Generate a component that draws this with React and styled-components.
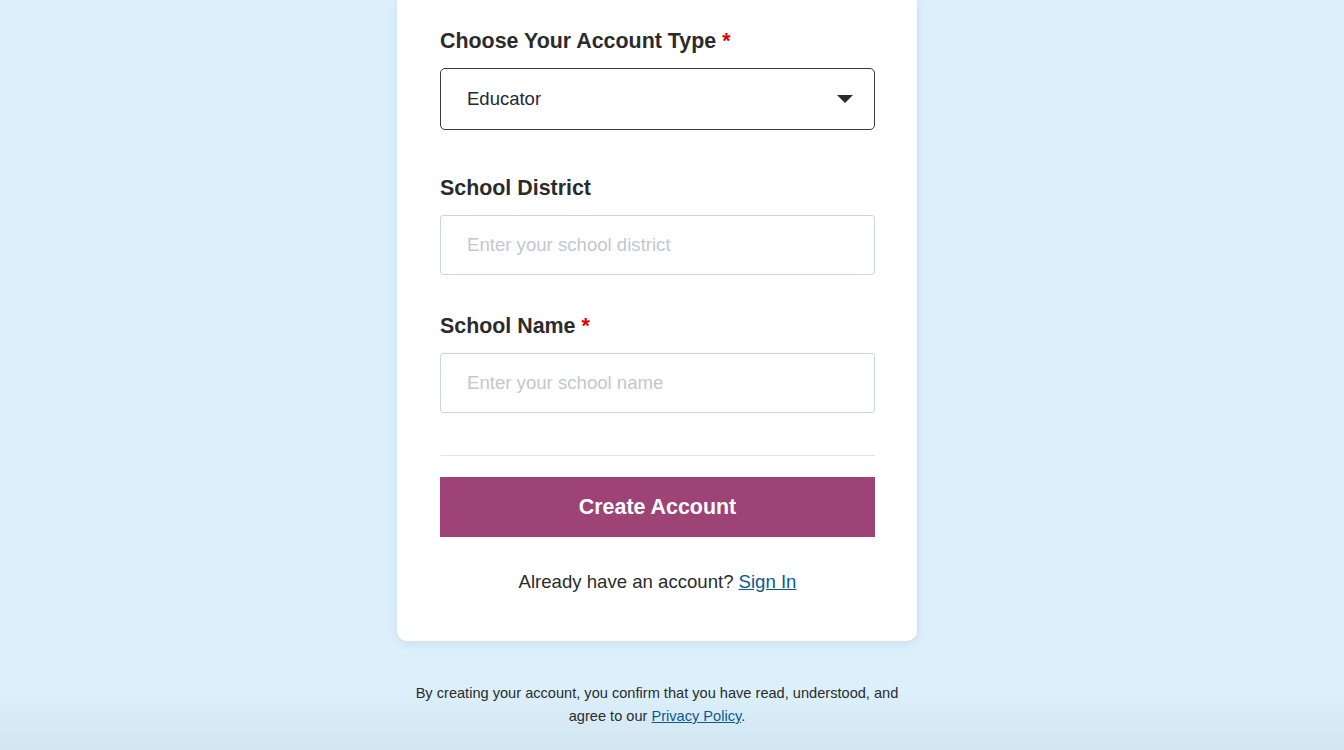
import React, { useState } from "react";
import styled, { createGlobalStyle } from "styled-components";

const GlobalStyle = createGlobalStyle`
  html, body {
    margin: 0;
    padding: 0;
    height: 100%;
    overflow: hidden;
  }
  body {
    font-family: "Liberation Sans", Arial, Helvetica, sans-serif;
    background: #dcf0fc;
    color: #2b2b2b;
  }
`;

const Page = styled.div`
  min-height: 750px;
  display: flex;
  flex-direction: column;
  align-items: center;
  padding-right: 30px;
  background: linear-gradient(
    to bottom,
    #dcf0fc 0,
    #dcf0fc 690px,
    #d2e5f1 750px
  );
`;

const Card = styled.div`
  width: 520px;
  box-sizing: border-box;
  background: #fff;
  padding: 29px 42px 47px 43px;
  border-radius: 0 0 10px 10px;
  box-shadow: 0 2px 10px rgba(60, 90, 120, 0.12);
`;

const Field = styled.div`
  display: flex;
  flex-direction: column;
  margin-bottom: ${(p) => p.mb || "0"};
`;

const Label = styled.label`
  font-size: 21.4px;
  line-height: 24px;
  font-weight: 700;
  color: #2b2b2b;
  margin-bottom: 15px;
`;

const Required = styled.span`
  color: #e00000;
  margin-left: 6px;
`;

const SelectBox = styled.div`
  height: 62px;
  box-sizing: border-box;
  border: 1px solid #3a3a3a;
  border-radius: 5px;
  display: flex;
  align-items: center;
  padding: 0 26px;
  font-size: 18.5px;
  color: #222a35;
`;

const Caret = styled.span`
  margin-left: auto;
  width: 0;
  height: 0;
  border-left: 8px solid transparent;
  border-right: 8px solid transparent;
  border-top: 8px solid #2b2b2b;
  margin-right: -5px;
`;

const Input = styled.input`
  height: 60px;
  box-sizing: border-box;
  border: 1px solid #c8d7e4;
  border-radius: 3px;
  padding: 0 26px;
  font-size: 18.6px;
  font-family: "Liberation Sans", Arial, sans-serif;
  color: #222a35;
  outline: none;
  &::placeholder {
    color: #c3c7cf;
  }
`;

const Divider = styled.hr`
  border: none;
  border-top: 1px solid #dbe7ef;
  margin: 42px 0 21px;
`;

const SubmitButton = styled.button`
  width: 100%;
  height: 60px;
  border: none;
  background: #9d4375;
  color: #fff;
  font-family: "Liberation Sans", Arial, sans-serif;
  font-size: 21.4px;
  font-weight: 700;
  cursor: pointer;
`;

const SignInRow = styled.p`
  margin: 33px 0 0;
  text-align: center;
  font-size: 18.6px;
  line-height: 24px;
  color: #2b2b2b;
`;

const TextLink = styled.a`
  color: #0a5a8c;
  text-decoration: underline;
  margin-left: ${(p) => p.ml || "0"};
`;

const Footer = styled.p`
  width: 500px;
  margin: 41px 0 0;
  text-align: center;
  font-size: 14.6px;
  line-height: 23px;
  color: #2b2b2b;
`;

export default function App() {
  const [district, setDistrict] = useState("");
  const [school, setSchool] = useState("");

  return (
    <>
      <GlobalStyle />
      <Page>
        <Card>
          <Field mb="46px">
            <Label>
              Choose Your Account Type<Required>*</Required>
            </Label>
            <SelectBox>
              Educator
              <Caret />
            </SelectBox>
          </Field>
          <Field mb="39px">
            <Label>School District</Label>
            <Input
              placeholder="Enter your school district"
              value={district}
              onChange={(e) => setDistrict(e.target.value)}
            />
          </Field>
          <Field>
            <Label>
              School Name<Required>*</Required>
            </Label>
            <Input
              placeholder="Enter your school name"
              value={school}
              onChange={(e) => setSchool(e.target.value)}
            />
          </Field>
          <Divider />
          <SubmitButton type="button">Create Account</SubmitButton>
          <SignInRow>
            Already have an account?<TextLink href="#" ml="5px">Sign In</TextLink>
          </SignInRow>
        </Card>
        <Footer>
          By creating your account, you confirm that you have read, understood, and
          agree to our <TextLink href="#">Privacy Policy</TextLink>.
        </Footer>
      </Page>
    </>
  );
}
